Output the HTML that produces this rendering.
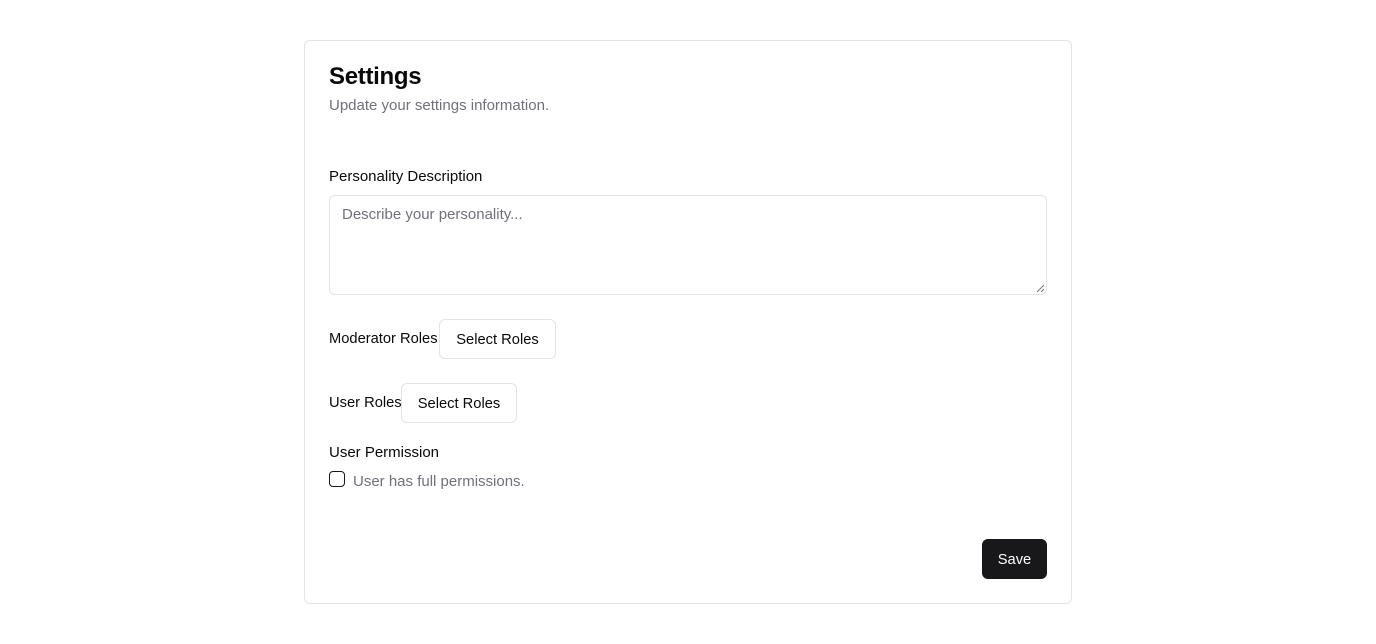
<!DOCTYPE html>
<html><head><style>
*{box-sizing:border-box;margin:0;padding:0}
body{width:1376px;height:644px;background:#fff;font-family:"Liberation Sans",sans-serif;color:#09090b;position:relative}
.card{position:absolute;left:304px;top:40px;width:768px;height:564px;border:1px solid #e4e4e7;border-radius:6px}
.a{position:absolute;white-space:nowrap}
.btn{position:absolute;border:1px solid #e4e4e7;border-radius:6px;background:#fff;font-size:14.7px;font-weight:500;display:flex;align-items:center;justify-content:center;height:40px;padding-top:1px}
</style></head><body>
<div class="card"></div>
<div class="a" style="left:329px;top:63px;font-size:24px;font-weight:bold;letter-spacing:-0.3px">Settings</div>
<div class="a" style="left:329px;top:97px;font-size:15px;color:#71717a">Update your settings information.</div>
<div class="a" style="left:329px;top:168px;font-size:15px;font-weight:500">Personality Description</div>
<div class="a" style="left:329px;top:195px;width:718px;height:100px;border:1px solid #e4e4e7;border-radius:6px"></div>
<div class="a" style="left:342px;top:206px;font-size:15px;color:#71717a">Describe your personality...</div>
<svg class="a" style="left:1036px;top:284px" width="9" height="9"><path d="M1 8L8 1M5 8L8 5" stroke="#777" stroke-width="1"/></svg>
<div class="a" style="left:329px;top:331px;font-size:14.7px;font-weight:500">Moderator Roles</div>
<div class="btn" style="left:439px;top:319px;width:117px">Select Roles</div>
<div class="a" style="left:329px;top:395px;font-size:14.7px;font-weight:500">User Roles</div>
<div class="btn" style="left:401px;top:383px;width:116px">Select Roles</div>
<div class="a" style="left:329px;top:444px;font-size:15px;font-weight:500">User Permission</div>
<div class="a" style="left:329px;top:471px;width:16px;height:16px;border:1.5px solid #18181b;border-radius:4px"></div>
<div class="a" style="left:353px;top:473px;font-size:15px;color:#71717a">User has full permissions.</div>
<div class="btn" style="left:982px;top:539px;width:65px;background:#18181b;border-color:#18181b;color:#fff">Save</div>
</body></html>
